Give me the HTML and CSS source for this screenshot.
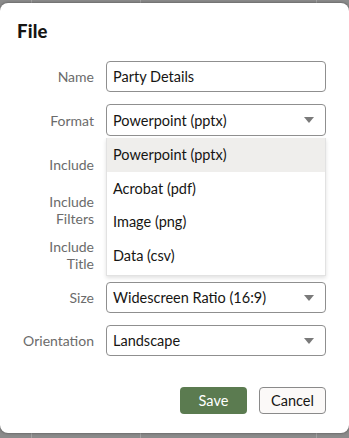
FILE: index.html
```html
<!DOCTYPE html>
<html>
<head>
<meta charset="utf-8">
<link rel="stylesheet" href="styles.css">
</head>
<body>
<div class="backdrop">
  <div class="dialog">
    <h1 class="title">File</h1>
    <div class="form">
      <div class="row r-name">
        <label class="label">Name</label>
        <div class="input">Party Details</div>
      </div>
      <div class="row r-format">
        <label class="label">Format</label>
        <div class="select">Powerpoint (pptx)<span class="caret"></span></div>
        <ul class="menu">
          <li class="item active">Powerpoint (pptx)</li>
          <li class="item">Acrobat (pdf)</li>
          <li class="item">Image (png)</li>
          <li class="item">Data (csv)</li>
        </ul>
      </div>
      <div class="row r-include">
        <label class="label">Include</label>
      </div>
      <div class="row r-filters">
        <label class="label">Include<br>Filters</label>
      </div>
      <div class="row r-titlerow">
        <label class="label">Include<br>Title</label>
      </div>
      <div class="row r-size">
        <label class="label">Size</label>
        <div class="select">Widescreen Ratio (16:9)<span class="caret"></span></div>
      </div>
      <div class="row r-orient">
        <label class="label">Orientation</label>
        <div class="select">Landscape<span class="caret"></span></div>
      </div>
    </div>
    <div class="actions">
      <button class="btn btn-primary">Save</button>
      <button class="btn btn-secondary">Cancel</button>
    </div>
  </div>
</div>
</body>
</html>
```

FILE: styles.css
```css
html, body {
  margin: 0;
  padding: 0;
}
body {
  width: 349px;
  height: 438px;
  overflow: hidden;
  background-color: #8b8b8b;
  background-image:
    linear-gradient(to right, transparent 31px, #a3a3a3 31px, #a3a3a3 32px, transparent 32px),
    linear-gradient(to right, transparent 140px, #a3a3a3 140px, #a3a3a3 141px, transparent 141px),
    linear-gradient(to right, transparent 316px, #a3a3a3 316px, #a3a3a3 317px, transparent 317px);
  font-family: Lato, "Liberation Sans", sans-serif;
  color: #161513;
}
.backdrop {
  padding-top: 3px;
}
.dialog {
  position: relative;
  background: #ffffff;
  height: 430px;
  border-radius: 8px;
  box-shadow: 0 0 3px rgba(0, 0, 0, 0.45);
  box-sizing: border-box;
  padding: 0 23px 0 17px;
}
.title {
  margin: 0;
  padding-top: 17px;
  font-size: 18.5px;
  line-height: 22px;
  font-weight: 900;
  color: #161513;
  letter-spacing: 0.2px;
}
.form {
  margin-top: 19px;
  display: flex;
  flex-direction: column;
  gap: 12px;
}
.row {
  position: relative;
  display: grid;
  grid-template-columns: 77px 220px;
  column-gap: 12px;
  align-items: center;
}
.r-name { height: 31px; }
.r-format { height: 32px; }
.r-include { height: 33px; }
.r-filters { height: 33px; }
.r-titlerow { height: 32px; }
.r-size { height: 31px; }
.r-orient { height: 31px; }
.label {
  text-align: right;
  font-size: 14px;
  line-height: 17px;
  color: #6b6b6b;
}
.input, .select {
  position: relative;
  box-sizing: border-box;
  height: 100%;
  border: 1px solid #8f8f8f;
  border-radius: 4px;
  padding: 0 6px;
  font-size: 14.5px;
  display: flex;
  align-items: center;
  color: #161513;
  background: #fff;
}
.caret {
  position: absolute;
  right: 11px;
  top: 50%;
  margin-top: -3px;
  width: 0;
  height: 0;
  border-left: 5px solid transparent;
  border-right: 5px solid transparent;
  border-top: 6px solid #7a7a7a;
}
.menu {
  position: absolute;
  left: 89px;
  top: 34px;
  width: 220px;
  box-sizing: border-box;
  margin: 0;
  padding: 0 0 3px;
  list-style: none;
  background: #fff;
  border: 1px solid #e2e2e2;
  border-top: none;
  box-shadow: 0 2px 4px rgba(0, 0, 0, 0.12);
  z-index: 5;
}
.item {
  height: 33.5px;
  display: flex;
  align-items: center;
  padding-left: 6px;
  font-size: 14.5px;
  color: #161513;
}
.item.active {
  background: #efeeec;
}
.actions {
  display: flex;
  justify-content: flex-end;
  gap: 12px;
  margin-top: 31px;
}
.btn {
  width: 67px;
  height: 27px;
  border-radius: 4px;
  font-family: Lato, "Liberation Sans", sans-serif;
  font-size: 14.5px;
  padding: 0;
  box-sizing: border-box;
}
.btn-primary {
  background: #5b7b50;
  border: none;
  color: #ffffff;
}
.btn-secondary {
  background: #fbf9f8;
  border: 1px solid #8a8a8a;
  color: #161513;
}
```
